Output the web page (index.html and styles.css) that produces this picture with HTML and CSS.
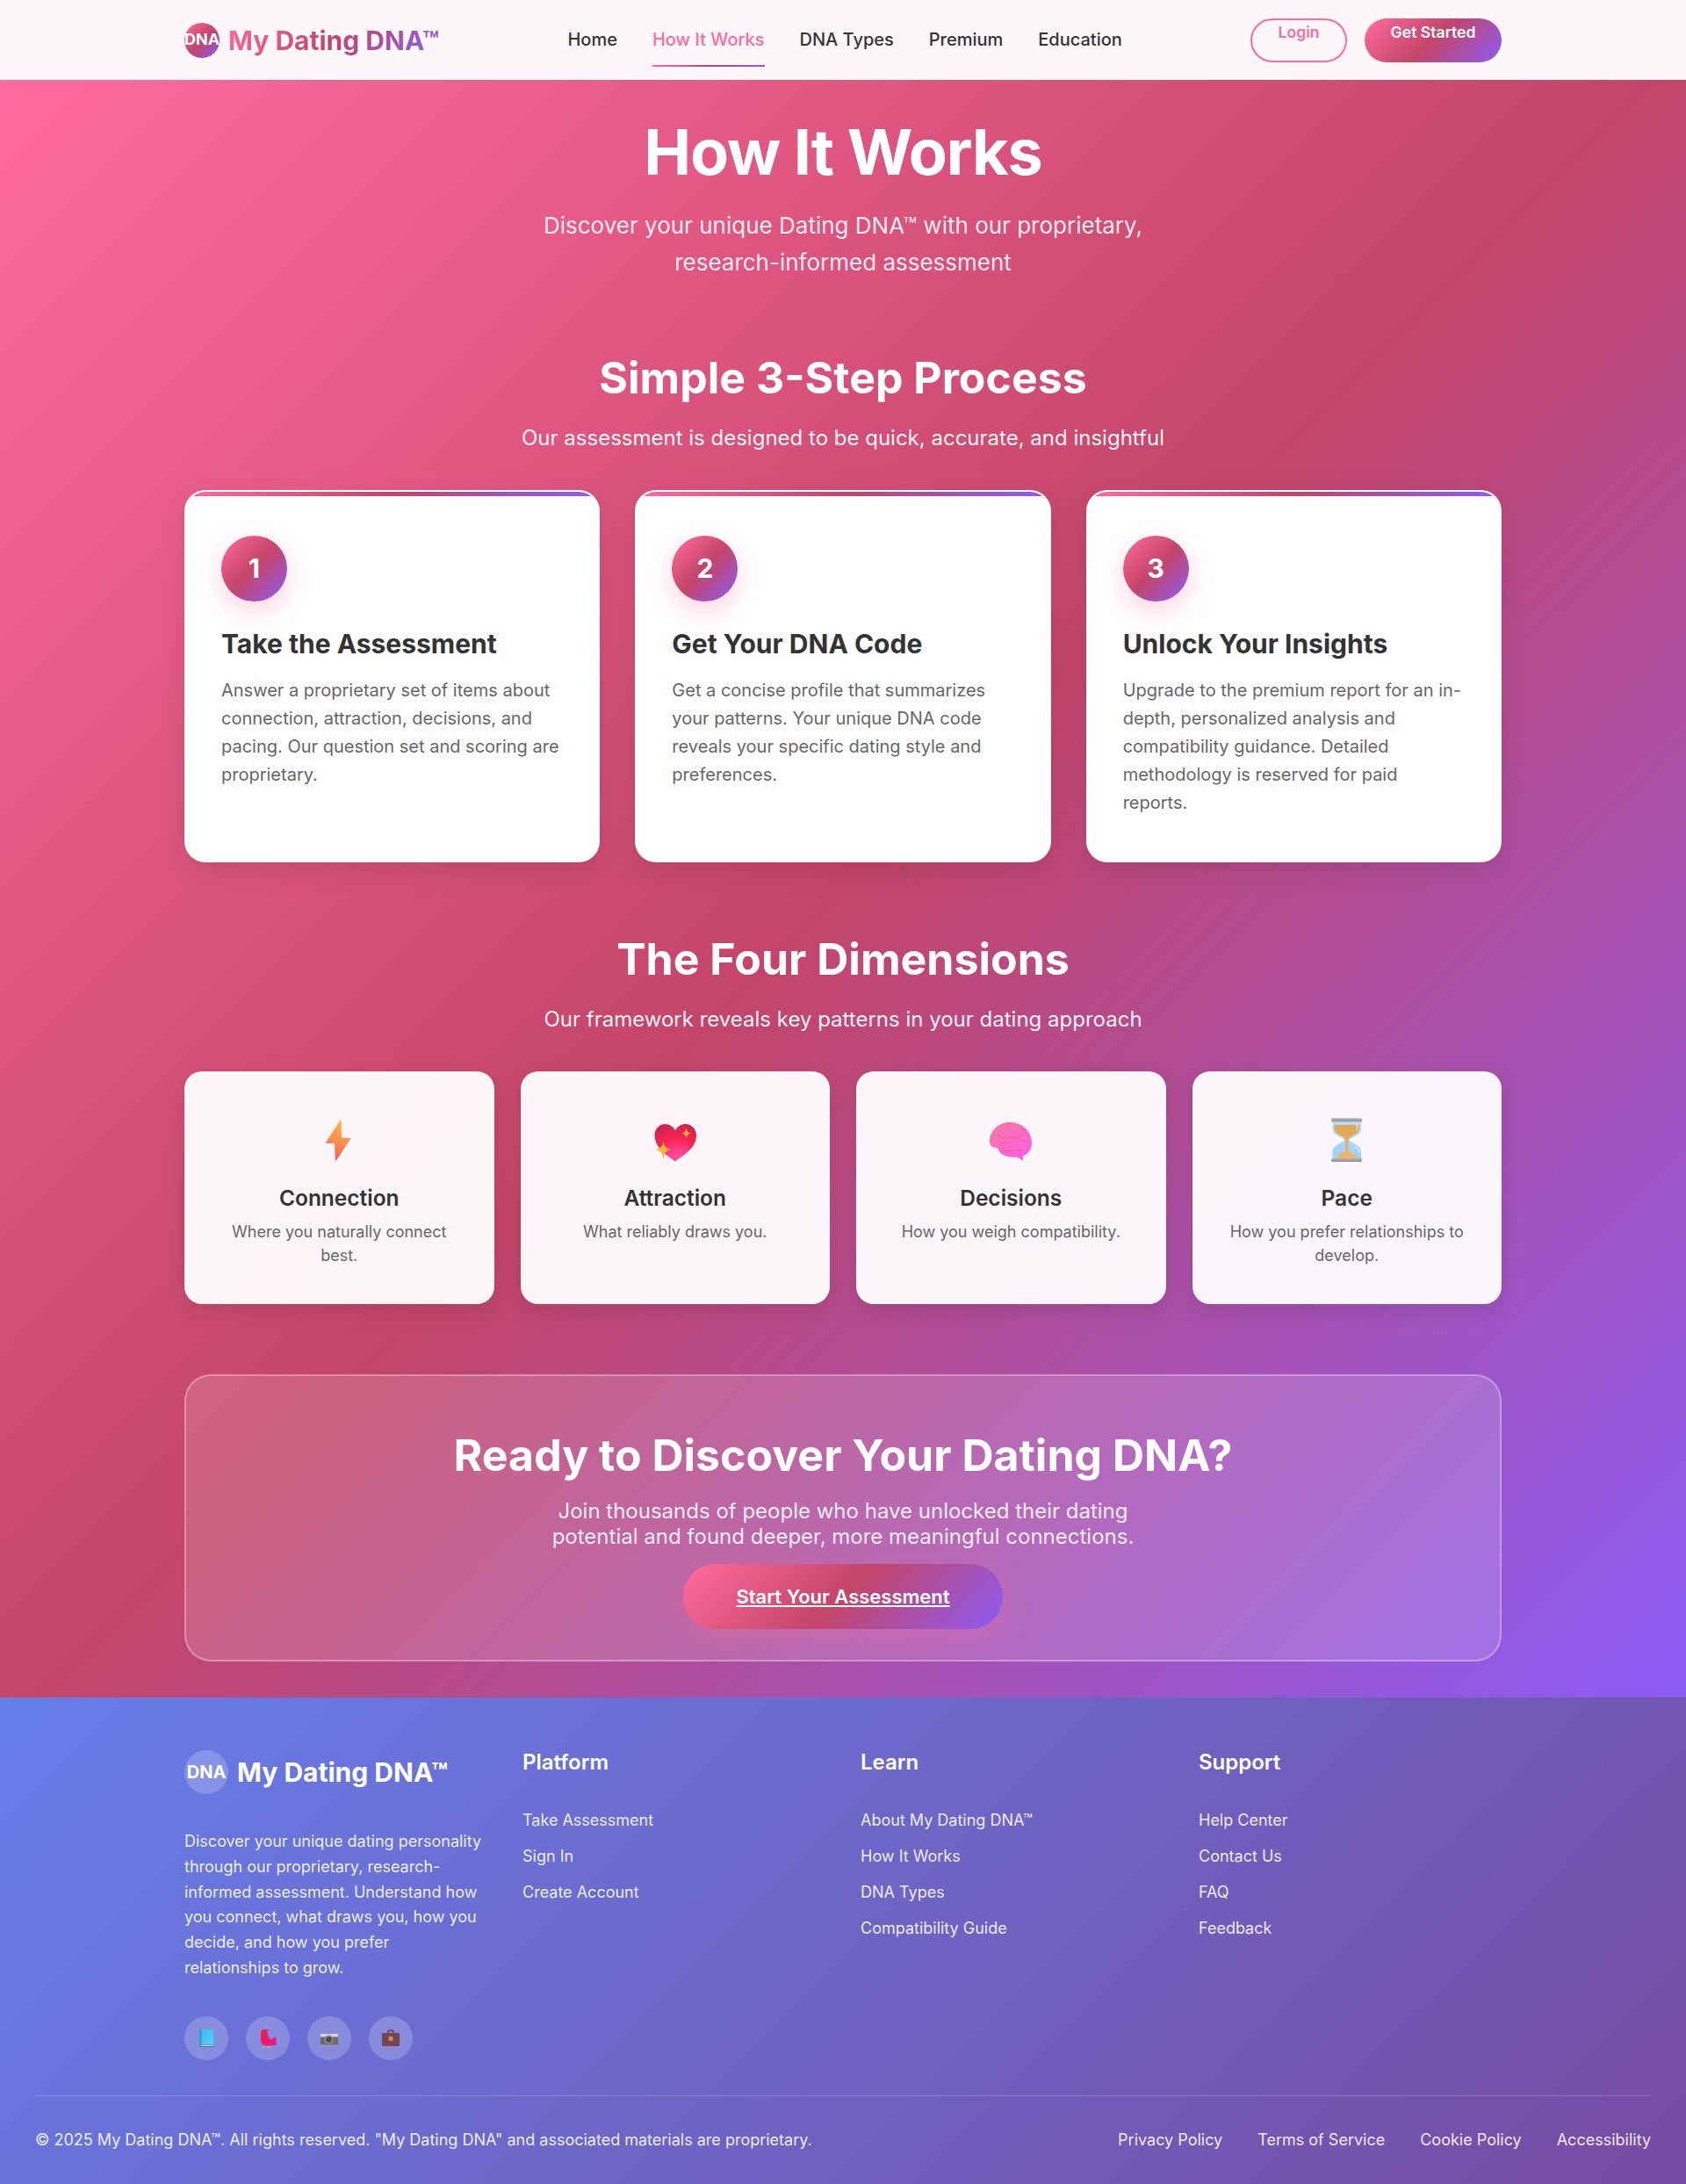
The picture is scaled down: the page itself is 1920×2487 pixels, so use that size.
FILE: index.html
```html
<!DOCTYPE html>
<html lang="en">
<head>
<meta charset="utf-8">
<title>How It Works - My Dating DNA</title>
<link rel="stylesheet" href="styles.css">
</head>
<body>
<svg class="defs" width="0" height="0" aria-hidden="true">
  <defs>
    <linearGradient id="gBolt" x1="0.6" y1="0" x2="0.3" y2="1"><stop offset="0" stop-color="#ffb347"/><stop offset="0.55" stop-color="#fb8b4e"/><stop offset="1" stop-color="#f2555a"/></linearGradient>
    <radialGradient id="gHeart" cx="0.55" cy="0.85" r="0.8"><stop offset="0" stop-color="#ff4fa8"/><stop offset="0.6" stop-color="#fb2350"/><stop offset="1" stop-color="#d5224f"/></radialGradient>
    <linearGradient id="gBrain" x1="0.1" y1="0" x2="0.8" y2="1"><stop offset="0" stop-color="#f47a9f"/><stop offset="1" stop-color="#ff5ce8"/></linearGradient>
    <linearGradient id="gGlass" x1="0" y1="0" x2="0" y2="1"><stop offset="0" stop-color="#b5dcfb"/><stop offset="1" stop-color="#9dd1fd"/></linearGradient>
    <linearGradient id="gSand" x1="0" y1="0" x2="0" y2="1"><stop offset="0" stop-color="#dea552"/><stop offset="1" stop-color="#f0b66a"/></linearGradient>
    <linearGradient id="gBar" x1="0" y1="0" x2="0" y2="1"><stop offset="0" stop-color="#b8b8bb"/><stop offset="1" stop-color="#8f8f93"/></linearGradient>
    <linearGradient id="gBook" x1="0" y1="0" x2="1" y2="1"><stop offset="0" stop-color="#3bb8ee"/><stop offset="1" stop-color="#55d2f5"/></linearGradient>
    <linearGradient id="gBird" x1="0" y1="0" x2="1" y2="1"><stop offset="0" stop-color="#e8214a"/><stop offset="1" stop-color="#f0168c"/></linearGradient>
  </defs>
</svg>

<header class="nav">
  <div class="nav-inner">
    <a class="logo" href="#"><span class="logo-mark">DNA</span><span class="logo-text">My Dating DNA™</span></a>
    <nav class="nav-links">
      <a href="#">Home</a>
      <a href="#" class="active">How It Works</a>
      <a href="#">DNA Types</a>
      <a href="#">Premium</a>
      <a href="#">Education</a>
    </nav>
    <div class="nav-actions">
      <a href="#" class="btn-login">Login</a>
      <a href="#" class="btn-start">Get Started</a>
    </div>
  </div>
</header>

<main class="main">
  <div class="container">
    <section class="hero">
      <h1>How It Works</h1>
      <p>Discover your unique Dating DNA™ with our proprietary,<br>research-informed assessment</p>
    </section>

    <section class="steps">
      <h2 class="section-title">Simple 3-Step Process</h2>
      <p class="section-sub">Our assessment is designed to be quick, accurate, and insightful</p>
      <div class="step-grid">
        <article class="step-card">
          <div class="step-num">1</div>
          <h3>Take the Assessment</h3>
          <p>Answer a proprietary set of items about connection, attraction, decisions, and pacing. Our question set and scoring are proprietary.</p>
        </article>
        <article class="step-card">
          <div class="step-num">2</div>
          <h3>Get Your DNA Code</h3>
          <p>Get a concise profile that summarizes your patterns. Your unique DNA code reveals your specific dating style and preferences.</p>
        </article>
        <article class="step-card">
          <div class="step-num">3</div>
          <h3>Unlock Your Insights</h3>
          <p>Upgrade to the premium report for an in-depth, personalized analysis and compatibility guidance. Detailed methodology is reserved for paid reports.</p>
        </article>
      </div>
    </section>

    <section class="dims">
      <h2 class="section-title">The Four Dimensions</h2>
      <p class="section-sub">Our framework reveals key patterns in your dating approach</p>
      <div class="dim-grid">
        <article class="dim-card">
          <svg class="dim-icon" viewBox="0 0 48 50"><path d="M25.5 2.800c.5-.4 1 0 1 .6L27 22.500l9.600.3c.6 0 .8.6.5 1.100L21 48.500c-.4.6-1.200.4-1.200-.3L19 28.800l-9.600.1c-.5 0-.7-.5-.4-.9z" fill="url(#gBolt)"/></svg>
          <h3>Connection</h3>
          <p>Where you naturally connect best.</p>
        </article>
        <article class="dim-card">
          <svg class="dim-icon" viewBox="0 0 48 50"><path d="M24 49.500C17 44 0.500 35 0.500 20 0.500 12.500 6 7 12 7c5 0 9 2.500 12 7 3-4.500 7-7 12-7 6 0 12 5.500 12 13C48 35 31 44 24 49.500z" fill="url(#gHeart)"/><path d="M36.500 11c.6 4 1.500 5.500 5 6.500-3.500 1-4.400 2.500-5 6.500-.6-4-1.500-5.500-5-6.500 3.500-1 4.400-2.500 5-6.500z" fill="#ffb13d"/><path d="M10.500 26c.9 6.500 2.500 8.500 9 10-6.500 1.500-8 4-9 12-1-8-2.500-10.500-9.500-12 7-1.500 8.500-3.500 9.500-10z" fill="#ffb13d"/></svg>
          <h3>Attraction</h3>
          <p>What reliably draws you.</p>
        </article>
        <article class="dim-card">
          <svg class="dim-icon" viewBox="0 0 48 50"><path d="M0 27C0 15 10 5 23 5c14 0 25 10 25 24 0 7-5 13-10 14v5.700l-6-4c-7 .3-16-.7-19.300-4.400-2.700-2.300-2.700-4.300-3.300-6C4 34 0 32 0 27z" fill="url(#gBrain)"/><path d="M20 6c-1 3 0 5 2 7M40 12c-1 6-5 10-9 11-4 1-8 0-10-2M11 31c3-3 6-4 10-3M16 37c7 1 14 1 20-1l1 3M33 23c2 3 5 4 9 3M9 18c2 3 4 5 8 5" fill="none" stroke="#e3558f" stroke-width=".7"/></svg>
          <h3>Decisions</h3>
          <p>How you weigh compatibility.</p>
        </article>
        <article class="dim-card">
          <svg class="dim-icon" viewBox="0 0 48 50"><path d="M7.500 4H40v9c0 7-11 8-14 12 3 4 14 6 14 13v8H7.500v-8c0-7 10.500-9 14-13-3.500-4-14-5-14-12z" fill="url(#gGlass)"/><path d="M9.500 8H38v4c0 6-10 8-12.700 13v13c3.700 1 8.700 3 10.200 8H12c1.500-5 6.500-7 10-8V25C19.500 20 9.500 18 9.500 12z" fill="url(#gSand)"/><path d="M34 7c2 2 2 5 1 7M33 33c3 1 5 3 5 7" fill="none" stroke="#fff" stroke-width="1.300" opacity=".75"/><rect x="6" y="0.300" width="35" height="4" rx="1.500" fill="url(#gBar)"/><rect x="6" y="46" width="35" height="4" rx="1.500" fill="url(#gBar)"/></svg>
          <h3>Pace</h3>
          <p>How you prefer relationships to develop.</p>
        </article>
      </div>
    </section>

    <section class="cta">
      <h2>Ready to Discover Your Dating DNA?</h2>
      <p>Join thousands of people who have unlocked their dating potential and found deeper, more meaningful connections.</p>
      <a href="#" class="cta-btn">Start Your Assessment</a>
    </section>
  </div>
</main>

<footer class="footer">
  <div class="footer-grid">
    <div class="footer-brand">
      <div class="footer-logo"><span class="footer-mark">DNA</span><span class="footer-name">My Dating DNA™</span></div>
      <p>Discover your unique dating personality through our proprietary, research-informed assessment. Understand how you connect, what draws you, how you decide, and how you prefer relationships to grow.</p>
      <div class="socials">
        <a href="#" class="social"><svg viewBox="0 0 20 24" width="20" height="24"><rect x="2" y="2" width="16" height="20" rx="1" fill="#3c6fae"/><rect x="2.500" y="2" width="15.500" height="17.500" rx=".5" fill="url(#gBook)"/><rect x="2.500" y="2" width="2" height="17.500" fill="#2f9cd8"/><rect x="3.500" y="20" width="14" height="1" fill="#e3e6f5"/></svg></a>
        <a href="#" class="social"><svg viewBox="0 0 22 24" width="22" height="24"><path d="M3 6.500C3 4 4.500 2 7 2h4.500L10 3.500l1.500 1L10.500 6l1 3c.8 2 1.500 3.500 2.500 4.500l1-1 1 1.500.5-2 4-1.500v9.500h-6c-2 1-7 .5-9-.5C3.500 18 3 16 3 14z" fill="url(#gBird)"/><path d="M3 5.500L1.500 6.500 3 7z" fill="#f5b040"/><path d="M7.500 20.500l-.5 1.800H5M11 21l-.5 1.500H14" stroke="#f5b040" stroke-width=".8" fill="none"/></svg></a>
        <a href="#" class="social"><svg viewBox="0 0 22 24" width="22" height="24"><rect x="1" y="7" width="20" height="13" rx="1" fill="#6a6a70"/><rect x="1" y="7" width="20" height="3.500" fill="#d4d4d8"/><rect x="2" y="19.500" width="18" height="1" fill="#a5a5aa"/><circle cx="10.500" cy="13.500" r="5" fill="#8a8a90"/><circle cx="10.500" cy="13.500" r="3" fill="#3a3a40"/><circle cx="10.500" cy="13.500" r="1.300" fill="#55555c"/></svg></a>
        <a href="#" class="social"><svg viewBox="0 0 22 24" width="22" height="24"><path d="M8 6V4.500C8 3.500 9 3 11 3s3 .5 3 1.500V6" fill="none" stroke="#5d3940" stroke-width="1.300"/><rect x="1" y="6" width="20" height="15" rx="1.500" fill="#754650"/><rect x="8.500" y="10" width="5" height="5" rx="1" fill="#d98a60"/></svg></a>
      </div>
    </div>
    <div class="footer-col">
      <h4>Platform</h4>
      <a href="#">Take Assessment</a>
      <a href="#">Sign In</a>
      <a href="#">Create Account</a>
    </div>
    <div class="footer-col">
      <h4>Learn</h4>
      <a href="#">About My Dating DNA™</a>
      <a href="#">How It Works</a>
      <a href="#">DNA Types</a>
      <a href="#">Compatibility Guide</a>
    </div>
    <div class="footer-col">
      <h4>Support</h4>
      <a href="#">Help Center</a>
      <a href="#">Contact Us</a>
      <a href="#">FAQ</a>
      <a href="#">Feedback</a>
    </div>
  </div>
  <div class="footer-bottom">
    <p>© 2025 My Dating DNA™. All rights reserved. "My Dating DNA" and associated materials are proprietary.</p>
    <div class="legal">
      <a href="#">Privacy Policy</a>
      <a href="#">Terms of Service</a>
      <a href="#">Cookie Policy</a>
      <a href="#">Accessibility</a>
    </div>
  </div>
</footer>
</body>
</html>
```
FILE: styles.css
```css
* { box-sizing: border-box; margin: 0; padding: 0; }
html, body { width: 100%; }
html { background: #764ba2; }
body { font-family: Inter, "Liberation Sans", sans-serif; color: #333; line-height: 1.6; }
a { text-decoration: none; color: inherit; }
.defs { display: block; height: 0; width: 0; }

.nav { height: 91px; background: #fef7fa; }
.nav-inner { width: 1500px; height: 91px; margin: 0 auto; display: flex; align-items: center; justify-content: space-between; }
.logo { display: flex; align-items: center; gap: 10px; }
.logo-mark { width: 40px; height: 40px; border-radius: 50%; background: linear-gradient(135deg, #ff6b9d, #c44569 50%, #8b5cf6); color: #fff; font-size: 18px; font-weight: 700; display: flex; align-items: center; justify-content: center; }
.logo-text { font-size: 30px; font-weight: 700; line-height: 1.2; background: linear-gradient(135deg, #ff6b9d, #c44569 50%, #8b5cf6); -webkit-background-clip: text; background-clip: text; color: transparent; }
.nav-links { display: flex; gap: 40px; align-items: center; height: 100%; }
.nav-links a { position: relative; top: -1px; font-size: 20px; font-weight: 500; color: #333; }
.nav-links a.active { color: #ff6b9d; }
.nav-links a.active::after { content: ""; position: absolute; left: 0; right: 0; bottom: -15px; height: 2px; background: linear-gradient(135deg, #ff6b9d, #c44569 50%, #8b5cf6); }
.nav-actions { display: flex; gap: 20px; align-items: stretch; height: 50px; }
.btn-login, .btn-start { font-size: 17.600px; font-weight: 600; border-radius: 25px; text-align: center; }
.btn-login { width: 110px; border: 2px solid #ff6b9d; color: #ff6b9d; }
.btn-start { width: 156px; padding-top: 2px; color: #fff; background: linear-gradient(135deg, #ff6b9d, #c44569 50%, #8b5cf6); }

.main { padding: 39px 0 40.700px; background: linear-gradient(135deg, #ff6b9d 0%, #c44569 50%, #8b5cf6 100%); }
.container { width: 1500px; margin: 0 auto; }

.hero { text-align: center; color: #fff; }
.hero h1 { font-size: 72px; font-weight: 700; line-height: 1.2; letter-spacing: -1.200px; }
.hero p { margin-top: 20px; font-size: 26px; line-height: 1.6; color: rgba(255,255,255,.9); }

.steps { margin-top: 80px; }
.section-title { font-size: 50px; font-weight: 700; line-height: 1.2; color: #fff; text-align: center; }
.section-sub { margin-top: 20px; font-size: 24px; line-height: 1.6; color: rgba(255,255,255,.95); text-align: center; }

.step-grid { margin-top: 40px; display: grid; grid-template-columns: repeat(3, 1fr); gap: 40px; }
.step-card { position: relative; overflow: hidden; padding: 50px 40px; border: 2px solid rgba(255,255,255,.9); border-radius: 24px; background: #fff; box-shadow: 0 10px 30px rgba(0,0,0,.1); }
.step-card::before { content: ""; position: absolute; left: 0; right: 0; top: 0; height: 5px; background: linear-gradient(135deg, #ff6b9d, #c44569 50%, #8b5cf6); }
.step-num { width: 75px; height: 75px; border-radius: 50%; color: #fff; font-size: 30px; font-weight: 700; display: flex; align-items: center; justify-content: center; background: linear-gradient(135deg, #ff6b9d, #c44569 50%, #8b5cf6); box-shadow: 0 10px 30px rgba(255,107,157,.3); }
.step-card h3 { margin-top: 24px; font-size: 30px; font-weight: 700; line-height: 1.6; color: #333; }
.step-card p { margin-top: 13px; font-size: 20px; line-height: 1.6; color: #666; }

.dims { margin-top: 80px; }
.dim-grid { margin-top: 40px; display: grid; grid-template-columns: repeat(4, 1fr); gap: 30px; }
.dim-card { padding: 40px 40px 41.800px; border-radius: 20px; background: rgba(255,255,255,.95); text-align: center; box-shadow: 0 8px 25px rgba(0,0,0,.1); }
.dim-icon { display: block; width: 48px; height: 50px; margin: 13px auto 0; }
.dim-card h3 { margin-top: 21px; font-size: 24.500px; font-weight: 600; line-height: 40px; color: #333; }
.dim-card p { margin-top: 4.500px; font-size: 18px; line-height: 1.5; color: #666; }

.cta { margin-top: 80px; padding: 60px 40px 35.500px; text-align: center; color: #fff; border: 2px solid rgba(255,255,255,.3); border-radius: 30px; background: rgba(255,255,255,.15); }
.cta h2 { font-size: 50px; font-weight: 700; line-height: 1.2; }
.cta p { width: 700px; margin: 20.500px auto 0; font-size: 24px; line-height: 1.2; color: rgba(255,255,255,.9); }
.cta-btn { display: block; width: 364px; height: 74px; margin: 16px auto 0; border-radius: 37px; font-size: 22px; font-weight: 600; line-height: 74px; color: #fff; text-decoration: underline; background: linear-gradient(135deg, #ff6b9d, #c44569 50%, #8b5cf6); box-shadow: 0 10px 30px rgba(255,107,157,.3); }

.footer { padding: 60px 0 35px; background: linear-gradient(135deg, #667eea, #764ba2); color: #fff; }
.footer-grid { width: 1500px; margin: 0 auto; display: grid; grid-template-columns: repeat(4, 345px); gap: 40px; }
.footer-logo { display: flex; align-items: center; gap: 10px; }
.footer-mark { width: 50px; height: 50px; border-radius: 50%; background: rgba(255,255,255,.2); display: flex; align-items: center; justify-content: center; font-size: 20px; font-weight: 700; }
.footer-name { font-size: 30px; font-weight: 700; line-height: 1.2; }
.footer-brand p { margin-top: 40px; font-size: 18px; line-height: 1.6; color: rgba(255,255,255,.9); }
.socials { display: flex; gap: 20px; margin-top: 40.500px; }
.social { width: 50px; height: 50px; border-radius: 50%; background: rgba(255,255,255,.2); display: flex; align-items: center; justify-content: center; }
.footer-col { display: flex; flex-direction: column; align-items: flex-start; }
.footer-col h4 { font-size: 24px; font-weight: 600; line-height: 1.2; margin-bottom: 37.500px; }
.footer-col a { font-size: 18px; line-height: 1.6; margin-bottom: 12px; color: rgba(255,255,255,.9); }
.footer-bottom { margin: 39.800px 40px 0; padding-top: 36px; border-top: 1px solid rgba(255,255,255,.2); display: flex; justify-content: space-between; align-items: center; font-size: 18px; color: rgba(255,255,255,.9); }
.legal { display: flex; gap: 40px; }
```
